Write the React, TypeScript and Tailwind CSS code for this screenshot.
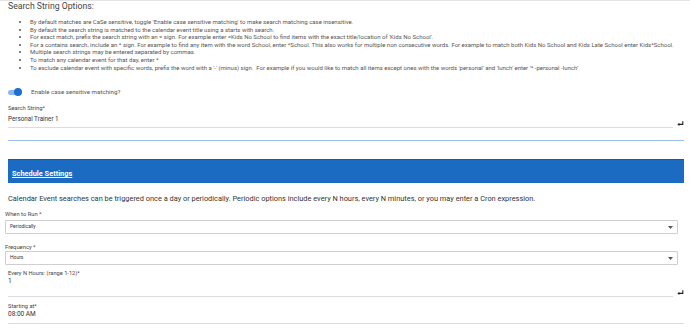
import React from 'react';

const bullets = [
  "By default matches are CaSe sensitive, toggle 'Enable case sensitive matching' to make search matching case insensitive.",
  'By default the search string is matched to the calendar event title using a starts with search.',
  "For exact match, prefix the search string with an = sign. For example enter =Kids No School to find items with the exact title/location of 'Kids No School'.",
  'For a contains search, include an * sign. For example to find any item with the word School, enter *School. This also works for multiple non consecutive words. For example to match both Kids No School and Kids Late School enter Kids*School.',
  'Multiple search strings may be entered separated by commas.',
  'To match any calendar event for that day, enter *',
  "To exclude calendar event with specific words, prefix the word with a '-' (minus) sign.  For example if you would like to match all items except ones with the words 'personal' and 'lunch' enter '* -personal -lunch'",
];

function ReturnIcon() {
  return (
    <svg width="7" height="5" viewBox="0 0 7 5" className="shrink-0">
      <path d="M5.8 0.3 V3.4 H2" stroke="#222" strokeWidth="1.1" fill="none" />
      <path d="M0.3 3.4 L2.4 1.8 V5 Z" fill="#222" />
    </svg>
  );
}

function Caret() {
  return (
    <svg width="5" height="3" viewBox="0 0 5 3" className="shrink-0">
      <path d="M0 0 H5 L2.5 3 Z" fill="#555" />
    </svg>
  );
}

function SelectBox({ value }: { value: string }) {
  return (
    <div className="flex h-[14px] items-center justify-between rounded-[1px] border border-[#cfcfcf] bg-white pl-[4px] pr-[4px]">
      <span className="text-[5px] text-[#333]">{value}</span>
      <Caret />
    </div>
  );
}

export default function App() {
  return (
    <div className="h-[330px] w-[690px] overflow-hidden bg-white font-['Roboto',sans-serif]">
      <div className="h-px bg-[#e4e4e4]" />

      <div className="pl-2 pr-[6px]">
        <div className="flex h-[11px] items-center text-[8.7px] text-[#444]">Search String Options:</div>
        <ul className="mt-[6px] list-disc pl-[22px] text-[6px] leading-[7.6px] text-[#555]">
          {bullets.map((b, i) => (
            <li key={i} className="whitespace-pre">
              {b}
            </li>
          ))}
        </ul>

        {/* case toggle */}
        <div className="mt-[16px] flex h-[10px] items-center gap-[9px]">
          <div className="relative h-[10px] w-[14px]">
            <div className="absolute left-0 top-[2.5px] h-[5px] w-[13px] rounded-full bg-[#8db6ea]" />
            <div className="absolute left-[6px] top-[1px] h-[8px] w-[8px] rounded-full bg-[#1a6fd0]" />
          </div>
          <span className="text-[6.2px] text-[#555]">Enable case sensitive matching?</span>
        </div>

        <div className="mt-[7px] flex h-[8px] items-center text-[5.8px] text-[#444]">Search String*</div>
        <div className="mt-[3px] flex items-start gap-[1px]">
          <div className="flex h-[13px] flex-1 items-start border-b border-[#dcdcdc]">
            <span className="flex h-[10px] items-center text-[6.3px] text-[#333]">Personal Trainer 1</span>
          </div>
          <div className="mt-[6px] w-[10px] pl-[3px]">
            <ReturnIcon />
          </div>
        </div>

        <div className="mt-[12px] h-px bg-[#9cbdea]" />

        <div className="mt-[18px] flex h-[24px] items-center border-t border-[#1559a8] bg-[#1b6bc3] pl-[4px] pt-[4px]">
          <span className="text-[7.4px] font-bold text-white underline">Schedule Settings</span>
        </div>

        <div className="mt-[10px] flex h-[10px] items-center text-[7.4px] text-[#333]">
          Calendar Event searches can be triggered once a day or periodically. Periodic options include every N hours, every N minutes, or you may enter a Cron expression.
        </div>
      </div>

      <div className="pl-[5px] pr-[12px]">
        <div className="mt-[7px] flex h-[8px] items-center text-[5.8px] text-[#444]">When to Run *</div>
        <div className="mt-[2px]">
          <SelectBox value="Periodically" />
        </div>
        <div className="mt-[9px] flex h-[8px] items-center text-[5.8px] text-[#444]">Frequency *</div>
        <div>
          <SelectBox value="Hours" />
        </div>
      </div>

      <div className="pl-2 pr-[6px]">
        <div className="mt-[4px] flex h-[8px] items-center text-[5.7px] text-[#444]">Every N Hours: (range 1-12)*</div>
        <div className="mt-[1px] flex items-start gap-[1px]">
          <div className="flex h-[19px] flex-1 items-start border-b border-[#dcdcdc]">
            <span className="flex h-[8px] items-center text-[6.5px] text-[#333]">1</span>
          </div>
          <div className="mt-[12px] w-[10px] pl-[3px]">
            <ReturnIcon />
          </div>
        </div>

        <div className="mt-[4px] flex h-[10px] items-center text-[5.7px] text-[#444]">Starting at*</div>
        <div className="flex h-[13px] items-start border-b border-[#dcdcdc]">
          <span className="flex h-[8px] items-center text-[6.5px] text-[#333]">08:00 AM</span>
        </div>
      </div>
    </div>
  );
}
